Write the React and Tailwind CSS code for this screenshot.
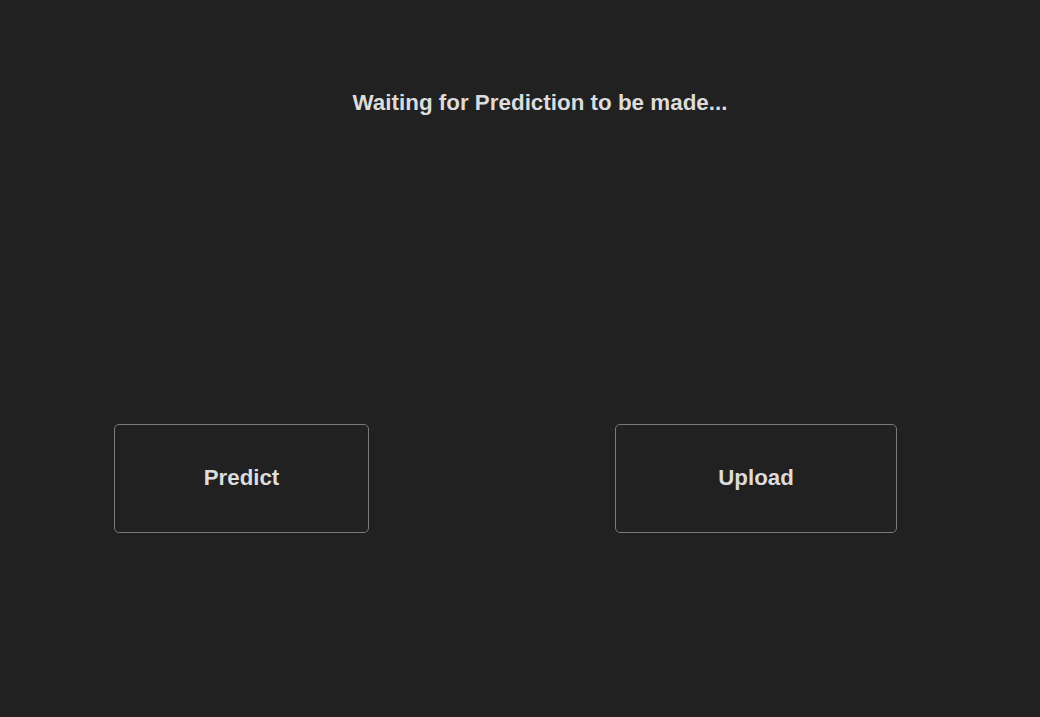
import React from "react";

const App = () => {
  return (
    <div
      className="min-h-screen w-full bg-[#212121] text-[#dcdcdc] flex flex-col"
      style={{ fontFamily: '"Liberation Sans", Arial, sans-serif' }}
    >
      <div className="flex justify-center pl-[40px] pt-[89px]">
        <h2 className="text-[22.4px] font-bold leading-[28px]">
          Waiting for Prediction to be made...
        </h2>
      </div>
      <div className="flex pl-[114px] pt-[307px] gap-[246px]">
        <button className="w-[255px] h-[109px] border border-[#7a7a7a] rounded-[5px] text-[22.3px] font-bold bg-transparent text-[#dcdcdc] pb-[1px]">
          Predict
        </button>
        <button className="w-[282px] h-[109px] border border-[#7a7a7a] rounded-[5px] text-[22.3px] font-bold bg-transparent text-[#dcdcdc] pb-[1px]">
          Upload
        </button>
      </div>
    </div>
  );
};

export default App;
